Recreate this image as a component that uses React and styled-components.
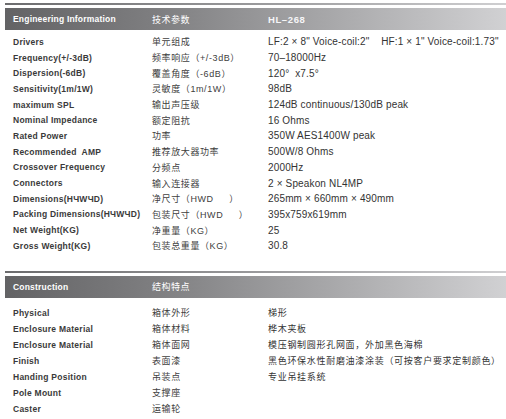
import React from 'react';
import styled, { createGlobalStyle } from 'styled-components';

const GlobalStyle = createGlobalStyle`
  body {
    margin: 0;
    background: #ffffff;
    font-family: "Liberation Sans", Arial, "Noto Sans CJK SC", sans-serif;
  }
`;

const engineering = [
  ['Drivers', '单元组成', 'LF:2 × 8" Voice-coil:2"    HF:1 × 1" Voice-coil:1.73"'],
  ['Frequency(+/-3dB)', '频率响应（+/-3dB）', '70–18000Hz'],
  ['Dispersion(-6dB)', '覆盖角度（-6dB）', '120°  x7.5°'],
  ['Sensitivity(1m/1W)', '灵敏度（1m/1W）', '98dB'],
  ['maximum SPL', '输出声压级', '124dB continuous/130dB peak'],
  ['Nominal Impedance', '额定阻抗', '16 Ohms'],
  ['Rated Power', '功率', '350W AES1400W peak'],
  ['Recommended  AMP', '推荐放大器功率', '500W/8 Ohms'],
  ['Crossover Frequency', '分频点', '2000Hz'],
  ['Connectors', '输入连接器', '2 × Speakon NL4MP'],
  ['Dimensions(HЧWЧD)', '净尺寸（HWD     ）', '265mm × 660mm × 490mm'],
  ['Packing Dimensions(HЧWЧD)', '包装尺寸（HWD     ）', '395x759x619mm'],
  ['Net Weight(KG)', '净重量（KG）', '25'],
  ['Gross Weight(KG)', '包装总重量（KG）', '30.8'],
];

const construction = [
  ['Physical', '箱体外形', '梯形'],
  ['Enclosure Material', '箱体材料', '桦木夹板'],
  ['Enclosure Material', '箱体面网', '模压钢制圆形孔网面，外加黑色海棉'],
  ['Finish', '表面漆', '黑色环保水性耐磨油漆涂装（可按客户要求定制颜色）'],
  ['Handing Position', '吊装点', '专业吊挂系统'],
  ['Pole Mount', '支撑座', ''],
  ['Caster', '运输轮', ''],
];

const Page = styled.div`
  width: 506px;
  padding-top: 3px;
`;

const Section = styled.section`
  margin-bottom: ${(p) => p.$after}px;
`;

const Rule = styled.div`
  margin-left: 5px;
  height: 2px;
  background: linear-gradient(to right, #6c6c6e, #9e9ea0 55%, #cfcfd1);
`;

const HeadBar = styled.div`
  margin: 3px 0 0 5px;
  height: 22px;
  display: grid;
  grid-template-columns: 139px 116px 1fr;
  align-items: center;
  padding-left: 8px;
  background: linear-gradient(to right, #636365, #7e7e80 30%, #9c9c9e 55%, #d1d1d3);
  color: #ffffff;
`;

const HeadLabel = styled.span`
  font-size: 8.5px;
  font-weight: bold;
  letter-spacing: 0.2px;
`;

const HeadCn = styled.span`
  font-family: "Noto Sans CJK SC", sans-serif;
  font-size: 9px;
  letter-spacing: 0.5px;
`;

const HeadModel = styled.span`
  font-size: 9.5px;
  font-weight: bold;
  letter-spacing: 0.6px;
  color: #f6f6f8;
`;

const Rows = styled.div`
  padding-top: ${(p) => p.$top}px;
`;

const Row = styled.div`
  display: grid;
  grid-template-columns: 139px 116px 1fr;
  align-items: center;
  height: ${(p) => p.$h}px;
  padding-left: 13px;
  white-space: pre;
`;

const Label = styled.span`
  font-size: 8.5px;
  font-weight: bold;
  letter-spacing: 0.25px;
  color: #3a3a3a;
`;

const Cn = styled.span`
  font-family: "Liberation Sans", "Noto Sans CJK SC", sans-serif;
  font-size: 9px;
  letter-spacing: 0.6px;
  color: #404040;
`;

const Value = styled.span`
  font-family: "Liberation Sans", "Noto Sans CJK SC", sans-serif;
  font-size: ${(p) => (p.$cn ? 9 : 10)}px;
  letter-spacing: ${(p) => (p.$cn ? 0.7 : 0.15)}px;
  color: #333333;
`;

function Table({ title, cnTitle, model, rows, rowH, top, after, cnValues }) {
  return (
    <Section $after={after}>
      <Rule />
      <HeadBar>
        <HeadLabel>{title}</HeadLabel>
        <HeadCn>{cnTitle}</HeadCn>
        <HeadModel>{model}</HeadModel>
      </HeadBar>
      <Rows $top={top}>
        {rows.map(([en, cn, val], i) => (
          <Row key={i} $h={rowH}>
            <Label>{en}</Label>
            <Cn>{cn}</Cn>
            <Value $cn={cnValues}>{val}</Value>
          </Row>
        ))}
      </Rows>
    </Section>
  );
}

export default function App() {
  return (
    <>
      <GlobalStyle />
      <Page>
        <Table
          title="Engineering Information"
          cnTitle="技术参数"
          model="HL–268"
          rows={engineering}
          rowH={15.7}
          top={4}
          after={17}
        />
        <Table
          title="Construction"
          cnTitle="结构特点"
          model=""
          rows={construction}
          rowH={16}
          top={7}
          after={0}
          cnValues
        />
      </Page>
    </>
  );
}
